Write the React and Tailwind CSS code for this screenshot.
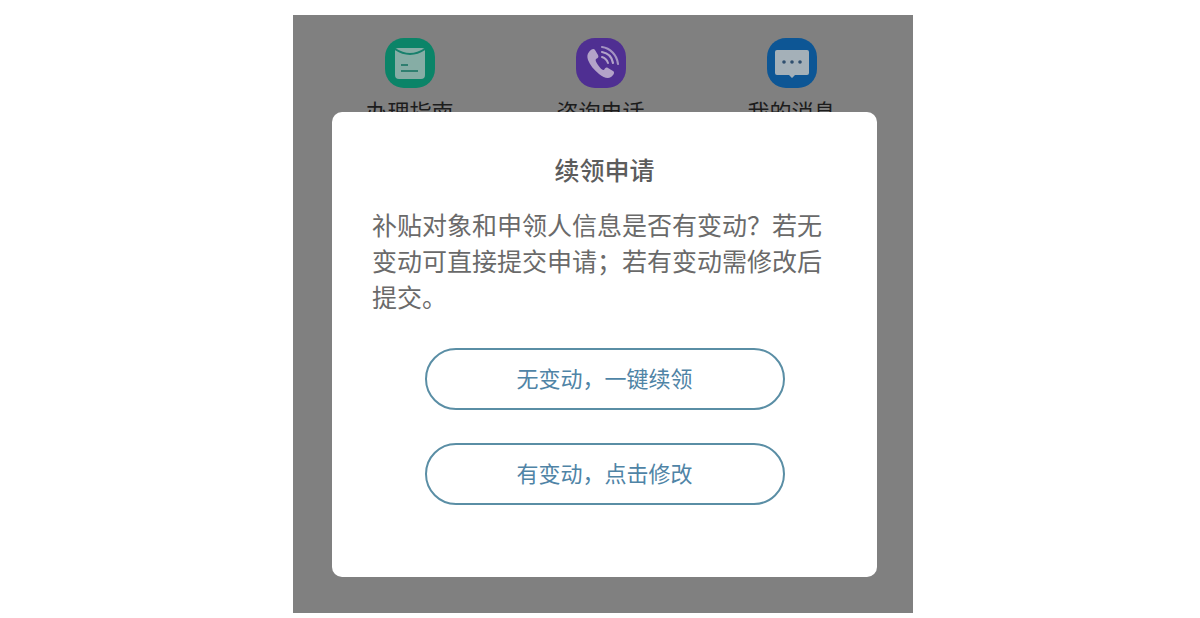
import React from "react";

const cjk = "font-['Noto_Sans_CJK_SC',sans-serif]";

function GuideIcon() {
  return (
    <svg viewBox="0 0 52 52" className="w-[52px] h-[52px]">
      <rect x="1" y="1" width="50" height="50" rx="19" fill="#0b8468" />
      <path d="M11 14a3 3 0 0 1 3-3h24a3 3 0 0 1 3 3v24a4 4 0 0 1-4 4H15a4 4 0 0 1-4-4z" fill="#86ada5" />
      <path d="M11 12q15 10 30 0" fill="none" stroke="#17806c" strokeWidth="2" />
      <path d="M17 28h7M17 34h17" stroke="#2f7f70" strokeWidth="2.2" />
    </svg>
  );
}

function PhoneIcon() {
  return (
    <svg viewBox="0 0 52 52" className="w-[52px] h-[52px]">
      <rect x="1" y="1" width="50" height="50" rx="19" fill="#4f2f92" />
      <path
        d="M14 15c2-3 5-4 6-2l3 5c1 2 0 3-2 4-1 1 0 3 2 6s4 5 6 5c1-2 2-3 4-2l5 3c2 1 1 4-2 6-3 2-7 1-12-3-5-4-9-9-11-14-1-3-1-6 1-8z"
        fill="#b3a3c9"
      />
      <path d="M27 15c6 1 10 5 11 11" fill="none" stroke="#b3a3c9" strokeWidth="2.2" strokeLinecap="round" />
      <path d="M27 10c8 1 15 8 16 17" fill="none" stroke="#a493c2" strokeWidth="2.2" strokeLinecap="round" />
      <path d="M27 20c3 1 5 3 6 6" fill="none" stroke="#b3a3c9" strokeWidth="2" strokeLinecap="round" />
    </svg>
  );
}

function MessageIcon() {
  return (
    <svg viewBox="0 0 52 52" className="w-[52px] h-[52px]">
      <rect x="1" y="1" width="50" height="50" rx="19" fill="#0d5695" />
      <path d="M11 13h30a2 2 0 0 1 2 2v21a2 2 0 0 1-2 2H29l-3 3-3-3H11a2 2 0 0 1-2-2V15a2 2 0 0 1 2-2z" fill="#a4b0b8" />
      <circle cx="18" cy="25" r="1.8" fill="#2f4f6f" />
      <circle cx="26" cy="25" r="1.8" fill="#2f4f6f" />
      <circle cx="34" cy="25" r="1.8" fill="#2f4f6f" />
    </svg>
  );
}

const shortcuts = [
  { label: "办理指南", icon: <GuideIcon /> },
  { label: "咨询电话", icon: <PhoneIcon /> },
  { label: "我的消息", icon: <MessageIcon /> },
];

export default function App() {
  return (
    <div className={`w-[1200px] h-[618px] bg-white overflow-hidden pt-[15px] ${cjk}`}>
      <div className="relative ml-[293px] w-[620px] h-[598px] bg-[#808080]">
        <div className="flex pt-[22px] pl-[21px]">
          {shortcuts.map((s) => (
            <div key={s.label} className="w-[191px] flex flex-col items-center">
              {s.icon}
              <span className="mt-[5px] text-[22px] leading-[32px] text-[#1c1c1c]">{s.label}</span>
            </div>
          ))}
        </div>

        <div className="absolute left-[39px] top-[97px] w-[545px] h-[465px] rounded-[10px] bg-white flex flex-col items-center">
          <h2 className="mt-[37px] text-[25px] leading-[40px] font-medium text-[#5c5c5c]">续领申请</h2>
          <p className="mt-[17px] ml-[40px] self-start w-[452px] text-[25px] leading-[36px] text-[#6a6a6a]">
            {"补贴对象和申领人信息是否有变动\uFF1F若无变动可直接提交申请\uFF1B若有变动需修改后提交。"}
          </p>
          <div className="mt-[34px] flex flex-col gap-[33px]">
            <button className="w-[360px] h-[62px] pb-[4px] rounded-full border-2 border-[#5a8ea5] text-[22px] text-[#4f84a6]">
              {"无变动\uFF0C一键续领"}
            </button>
            <button className="w-[360px] h-[62px] pb-[4px] rounded-full border-2 border-[#5a8ea5] text-[22px] text-[#4f84a6]">
              {"有变动\uFF0C点击修改"}
            </button>
          </div>
        </div>
      </div>
    </div>
  );
}
